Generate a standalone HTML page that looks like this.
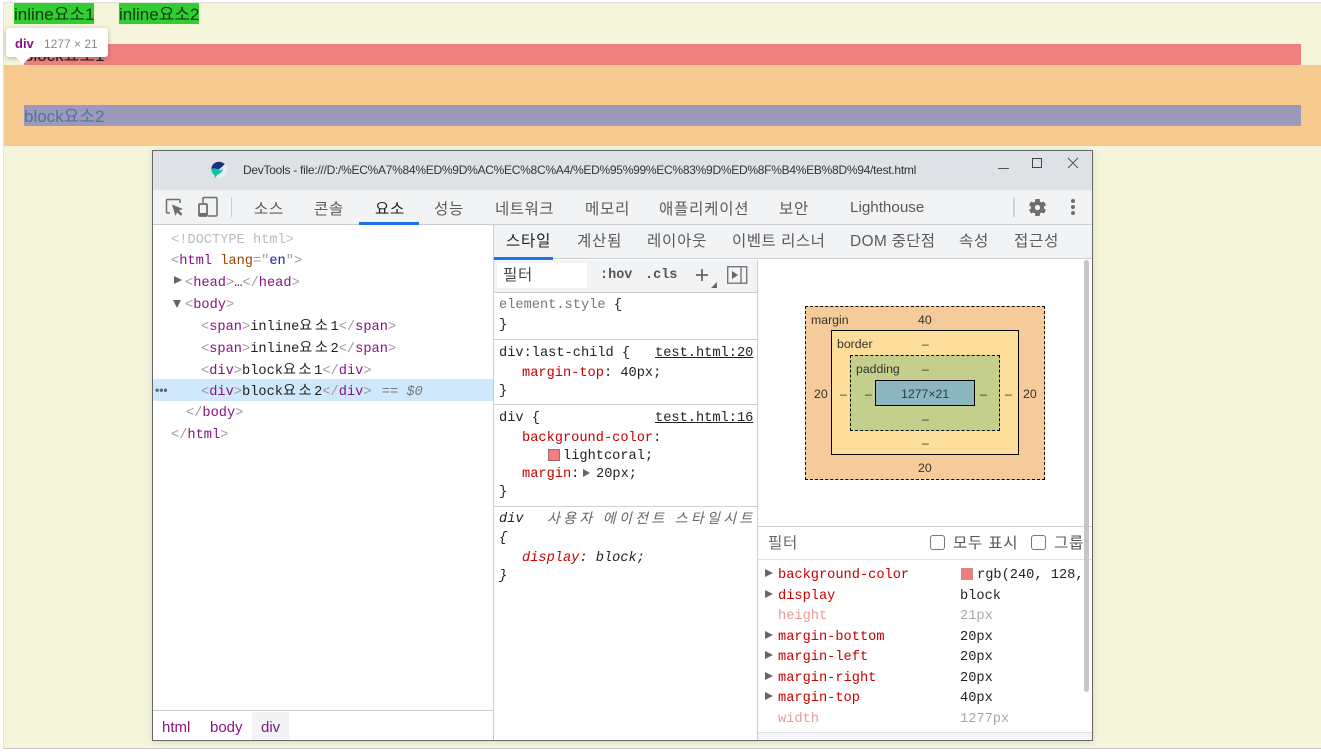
<!DOCTYPE html>
<html lang="ko"><head><meta charset="utf-8"><title>DevTools</title>
<style>
*{box-sizing:border-box}
html,body{margin:0;padding:0;width:1321px;height:753px;overflow:hidden;background:#fff}
body{position:relative;font-family:"Liberation Sans","Noto Sans CJK KR",sans-serif;font-size:14px;color:#000}
.b{position:absolute}
.t{position:absolute;white-space:nowrap;line-height:20px;height:20px;transform:translateY(2px)}
.m{font-family:"Liberation Mono","Noto Sans CJK KR",monospace;font-size:13.67px;color:#222}
.s{font-family:"Liberation Sans","Noto Sans CJK KR",sans-serif;font-size:15.5px;letter-spacing:.8px;color:#5a5a5a}
.g{color:#a3989f}.p{color:#881280}.a{color:#994500}.v{color:#1a1aa6}.c{color:#c80000}
.k{font-size:14px;letter-spacing:2.7px;line-height:0;font-family:"Noto Sans CJK KR",sans-serif}
.d{color:#a8a8a8}.f{color:#e79a9a}
.u{text-decoration:underline}
.l{height:1px;background:#cdd0d6;position:absolute}
.tri{position:absolute;width:0;height:0;border-left:8px solid #666;border-top:4.5px solid transparent;border-bottom:4.5px solid transparent}
.bm{font-size:12.3px;color:#333;font-family:"Liberation Sans","Noto Sans CJK KR",sans-serif;transform:translateY(1px)}
</style></head><body>

<div class="b" style="left:3px;top:2px;width:1318px;height:747px;background:#f5f5dc;border-top:1px solid #dfe1e3;border-left:1px solid #dfe1e3;border-bottom:1px solid #c8c8c8"></div>

<div class="b" style="left:14px;top:3px;width:80px;height:21px;background:#32cd32"></div>
<div class="b" style="left:119px;top:3px;width:80px;height:21px;background:#32cd32"></div>
<div class="t" style="left:14px;top:3px;font-size:17px;color:#0c3d0c">inline요소1</div>
<div class="t" style="left:119px;top:3px;font-size:17px;color:#0c3d0c">inline요소2</div>

<div class="b" style="left:24px;top:44px;width:1277px;height:21px;background:#f08080"></div>
<div class="t" style="left:24px;top:44px;font-size:17px;color:#222">block요소1</div>
<div class="b" style="left:4px;top:65px;width:1317px;height:81px;background:#f6c98f"></div>
<div class="b" style="left:24px;top:105px;width:1277px;height:21px;background:#9b9aba"></div>
<div class="t" style="left:24px;top:105px;font-size:17px;color:#4f74a0">block요소2</div>

<!-- tooltip -->
<div class="b" style="left:6px;top:28px;width:102px;height:29px;background:#fff;border-radius:3px;box-shadow:0 1px 5px rgba(0,0,0,.28)"></div>
<svg class="b" style="left:14px;top:56px" width="18" height="10"><path d="M2 1L9 8L16 1Z" fill="#fff"/></svg>
<div class="t" style="left:15px;top:32px;font-size:13px;font-weight:bold;color:#881280">div</div>
<div class="t" style="left:44px;top:32px;font-size:12px;color:#888">1277 × 21</div>

<!-- devtools window -->
<div class="b" style="left:152px;top:150px;width:941px;height:591px;background:#fff;border:1px solid #666;box-shadow:0 1px 6px rgba(0,0,0,.12)"></div>
<div class="b" style="left:153px;top:151px;width:939px;height:39px;background:#dee1e6"></div>
<svg class="b" style="left:209px;top:160px" width="20" height="20" viewBox="0 0 20 20"><circle cx="10" cy="10" r="8.300" fill="#e6f2f0"/><path d="M2.300 9C2.300 5 5.500 1.700 10 1.700c2.500 0 4.500 1 5.800 2.500L10 9.500 5 8.500z" fill="#1f2f80"/><path d="M2.200 8.500C5 8 8 8.500 10 10c1 .8 3-.5 4-2-.2 3.500-2.500 6-5.500 6.500L6 18.200l-.7-3.200C3.300 14 2 11 2.200 8.500z" fill="#12c0a8"/></svg>
<div class="t" style="left:243px;top:158px;font-size:12px;letter-spacing:-.27px;color:#333">DevTools - file:///D:/%EC%A7%84%ED%9D%AC%EC%8C%A4/%ED%95%99%EC%83%9D%ED%8F%B4%EB%8D%94/test.html</div>
<div class="b" style="left:998px;top:168px;width:11px;height:1px;background:#555"></div>
<div class="b" style="left:1032px;top:158px;width:10px;height:10px;border:1px solid #444"></div>
<svg class="b" style="left:1067px;top:157px" width="12" height="12"><path d="M1 1L11 11M11 1L1 11" stroke="#555" stroke-width="1" fill="none"/></svg>

<!-- toolbar -->
<div class="b" style="left:153px;top:190px;width:939px;height:35px;background:#f1f3f4;border-bottom:1px solid #cacdd1"></div>
<svg class="b" style="left:165px;top:198px" width="20" height="20" viewBox="0 0 20 20"><path d="M5 15H2.500A1 1 0 0 1 1.500 14V2.500A1 1 0 0 1 2.500 1.500H14A1 1 0 0 1 15 2.500V5" fill="none" stroke="#6e6e6e" stroke-width="1.500"/><path d="M7 6.500L18 11l-4 1.500 3.500 3.500-1.800 1.800-3.500-3.500L10.500 18z" fill="#6e6e6e"/></svg>
<svg class="b" style="left:197px;top:196px" width="22" height="22" viewBox="0 0 22 22"><path d="M6 7V2.500A1 1 0 0 1 7 1.500h12a1 1 0 0 1 1 1V19a1 1 0 0 1-1 1h-8" fill="none" stroke="#6e6e6e" stroke-width="1.500"/><rect x="2" y="8" width="8" height="12" rx="1" fill="none" stroke="#6e6e6e" stroke-width="1.800"/><rect x="2" y="17" width="8" height="3" fill="#6e6e6e"/></svg>
<div class="b" style="left:231px;top:197px;width:1px;height:20px;background:#ccc"></div>
<div class="t s" style="left:254px;top:198px">소스</div>
<div class="t s" style="left:314px;top:198px">콘솔</div>
<div class="t s" style="left:375px;top:198px;color:#222">요소</div>
<div class="t s" style="left:434px;top:198px">성능</div>
<div class="t s" style="left:495px;top:198px;letter-spacing:.5px">네트워크</div>
<div class="t s" style="left:585px;top:198px">메모리</div>
<div class="t s" style="left:659px;top:198px">애플리케이션</div>
<div class="t s" style="left:779px;top:198px">보안</div>
<div class="t s" style="left:850px;top:196px;font-size:15.2px;letter-spacing:0">Lighthouse</div>
<div class="b" style="left:359px;top:222px;width:60px;height:3px;background:#1a73e8"></div>
<div class="b" style="left:1013px;top:197px;width:2px;height:20px;background:#d0d3d8"></div>
<svg class="b" style="left:1027px;top:197px" width="21" height="21" viewBox="0 0 24 24"><path fill="#6e6e6e" fill-rule="evenodd" d="M19.400 13a7.500 7.500 0 0 0 0-2l2.300-1.800-2.300-4-2.800 1.100a7.500 7.500 0 0 0-1.700-1L14.500 2.300h-5l-.4 3a7.500 7.500 0 0 0-1.700 1L4.600 5.200l-2.300 4L4.600 11a7.500 7.500 0 0 0 0 2l-2.300 1.800 2.300 4 2.800-1.100a7.500 7.500 0 0 0 1.700 1l.4 3h5l.4-3a7.500 7.500 0 0 0 1.700-1l2.800 1.100 2.300-4zM12 15a3 3 0 1 1 0-6 3 3 0 0 1 0 6z"/></svg>
<svg class="b" style="left:1070px;top:198px" width="6" height="18"><circle cx="3" cy="3" r="2" fill="#6e6e6e"/><circle cx="3" cy="9" r="2" fill="#6e6e6e"/><circle cx="3" cy="15" r="2" fill="#6e6e6e"/></svg>

<!-- elements panel -->
<div class="b" style="left:493px;top:225px;width:1px;height:515px;background:#cacdd1"></div>
<div class="t m" style="left:171px;top:229px;color:#bbb">&lt;!DOCTYPE html&gt;</div>
<div class="t m" style="left:171px;top:250px"><span class="g">&lt;</span><span class="p">html</span> <span class="a">lang</span><span class="g">="</span><span class="v">en</span><span class="g">"&gt;</span></div>
<div class="tri" style="left:174px;top:276px"></div>
<div class="t m" style="left:185px;top:272px"><span class="g">&lt;</span><span class="p">head</span><span class="g">&gt;</span>…<span class="g">&lt;/</span><span class="p">head</span><span class="g">&gt;</span></div>
<div class="b" style="left:173px;top:300px;width:0;height:0;border-top:8px solid #666;border-left:4.500px solid transparent;border-right:4.500px solid transparent"></div>
<div class="t m" style="left:185px;top:294px"><span class="g">&lt;</span><span class="p">body</span><span class="g">&gt;</span></div>
<div class="t m" style="left:201px;top:316px"><span class="g">&lt;</span><span class="p">span</span><span class="g">&gt;</span>inline<span class="k">요소</span>1<span class="g">&lt;/</span><span class="p">span</span><span class="g">&gt;</span></div>
<div class="t m" style="left:201px;top:338px"><span class="g">&lt;</span><span class="p">span</span><span class="g">&gt;</span>inline<span class="k">요소</span>2<span class="g">&lt;/</span><span class="p">span</span><span class="g">&gt;</span></div>
<div class="t m" style="left:201px;top:360px"><span class="g">&lt;</span><span class="p">div</span><span class="g">&gt;</span>block<span class="k">요소</span>1<span class="g">&lt;/</span><span class="p">div</span><span class="g">&gt;</span></div>
<div class="b" style="left:153px;top:379px;width:340px;height:22px;background:#cfe8fc"></div>
<div class="t" style="left:155px;top:378px;font-size:12px;font-weight:bold;color:#666;letter-spacing:0">•••</div>
<div class="t m" style="left:201px;top:381px"><span class="g">&lt;</span><span class="p">div</span><span class="g">&gt;</span>block<span class="k">요소</span>2<span class="g">&lt;/</span><span class="p">div</span><span class="g">&gt;</span> <span style="color:#777;font-style:italic;margin-left:2px">== $0</span></div>
<div class="t m" style="left:186px;top:402px"><span class="g">&lt;/</span><span class="p">body</span><span class="g">&gt;</span></div>
<div class="t m" style="left:171px;top:424px"><span class="g">&lt;/</span><span class="p">html</span><span class="g">&gt;</span></div>

<!-- breadcrumbs -->
<div class="b" style="left:153px;top:710px;width:340px;height:1px;background:#cacdd1"></div>
<div class="b" style="left:252px;top:712px;width:37px;height:28px;background:#f1f3f4"></div>
<div class="t" style="left:162px;top:716px;color:#881280;font-size:15px">html</div>
<div class="t" style="left:210px;top:716px;color:#881280;font-size:15px">body</div>
<div class="t" style="left:261px;top:716px;color:#881280;font-size:15px">div</div>

<!-- subtabs -->
<div class="b" style="left:494px;top:225px;width:598px;height:34px;background:#f1f3f4;border-bottom:1px solid #cacdd1"></div>
<div class="t s" style="left:506px;top:230px;color:#222">스타일</div>
<div class="t s" style="left:577px;top:230px">계산됨</div>
<div class="t s" style="left:647px;top:230px">레이아웃</div>
<div class="t s" style="left:732px;top:230px;letter-spacing:.5px">이벤트 리스너</div>
<div class="t s" style="left:850px;top:230px;letter-spacing:.3px">DOM 중단점</div>
<div class="t s" style="left:959px;top:230px">속성</div>
<div class="t s" style="left:1014px;top:230px">접근성</div>
<div class="b" style="left:494px;top:257px;width:59px;height:3px;background:#1a73e8"></div>

<!-- styles pane -->
<div class="b" style="left:494px;top:260px;width:263px;height:33px;background:#f1f3f4;border-bottom:1px solid #cdd0d6"></div>
<div class="b" style="left:497px;top:263px;width:90px;height:25px;background:#fff"></div>
<div class="t s" style="left:503px;top:264px;color:#444">필터</div>
<div class="t" style="left:600px;top:264px;font-family:'Liberation Mono',monospace;font-size:13.5px;font-weight:bold;color:#555">:hov</div>
<div class="t" style="left:645px;top:264px;font-family:'Liberation Mono',monospace;font-size:13.5px;font-weight:bold;color:#555">.cls</div>
<svg class="b" style="left:694px;top:267px" width="24" height="22"><path d="M2 8H14M8 2V14" stroke="#666" stroke-width="1.800"/><path d="M23 15V21H17Z" fill="#666"/></svg>
<svg class="b" style="left:727px;top:266px" width="21" height="19"><rect x=".7" y=".7" width="19" height="16.500" fill="none" stroke="#777" stroke-width="1.400"/><path d="M14 1V17" stroke="#777" stroke-width="1.400"/><path d="M5 5L11 9L5 13Z" fill="#666"/></svg>
<div class="b" style="left:757px;top:260px;width:1px;height:480px;background:#cacdd1"></div>

<div class="t m" style="left:499px;top:294px;color:#777">element.style <span style="color:#222">{</span></div>
<div class="t m" style="left:499px;top:314px">}</div>
<div class="l" style="left:494px;top:339px;width:263px"></div>
<div class="t m" style="left:499px;top:342px">div:last-child {</div>
<div class="t m u" style="left:655px;top:342px">test.html:20</div>
<div class="t m" style="left:522px;top:362px"><span class="c">margin-top</span>: 40px;</div>
<div class="t m" style="left:499px;top:380px">}</div>
<div class="l" style="left:494px;top:404px;width:263px"></div>
<div class="t m" style="left:499px;top:407px">div {</div>
<div class="t m u" style="left:655px;top:407px">test.html:16</div>
<div class="t m" style="left:522px;top:427px"><span class="c">background-color</span>:</div>
<div class="b" style="left:548px;top:449px;width:12px;height:12px;background:#f08080;border:1px solid #a06a6a"></div>
<div class="t m" style="left:563px;top:445px">lightcoral;</div>
<div class="t m" style="left:522px;top:463px"><span class="c">margin</span>:</div>
<div class="tri" style="left:583px;top:469px;border-left-width:7px"></div>
<div class="t m" style="left:596px;top:463px">20px;</div>
<div class="t m" style="left:499px;top:481px">}</div>
<div class="l" style="left:494px;top:506px;width:263px"></div>
<div class="t m" style="left:499px;top:508px;font-style:italic">div</div>
<div class="t" style="left:547px;top:506px;font-size:14px;font-style:italic;color:#666;letter-spacing:3.300px;font-family:'Noto Sans CJK KR',sans-serif">사용자 에이전트 스타일시트</div>
<div class="t m" style="left:499px;top:527px;font-style:italic">{</div>
<div class="t m" style="left:522px;top:547px;font-style:italic"><span class="c">display</span>: block;</div>
<div class="t m" style="left:499px;top:565px;font-style:italic">}</div>

<!-- box model -->
<div class="b" style="left:805px;top:306px;width:240px;height:174px;background:#f6cb9a;border:1px dashed #000"></div>
<div class="b" style="left:831px;top:330px;width:188px;height:125px;background:#fddd9a;border:1px solid #000"></div>
<div class="b" style="left:850px;top:355px;width:150px;height:76px;background:#c3cf8b;border:1px dashed #000"></div>
<div class="b" style="left:875px;top:380px;width:100px;height:26px;background:#8cb6c0;border:1px solid #000"></div>
<div class="t bm" style="left:811px;top:309px">margin</div>
<div class="t bm" style="left:918px;top:309px">40</div>
<div class="t bm" style="left:837px;top:333px">border</div>
<div class="t bm" style="left:922px;top:333px">–</div>
<div class="t bm" style="left:856px;top:358px">padding</div>
<div class="t bm" style="left:922px;top:358px">–</div>
<div class="t bm" style="left:901px;top:383px;color:#2c3a50">1277×21</div>
<div class="t bm" style="left:814px;top:383px">20</div>
<div class="t bm" style="left:840px;top:383px">–</div>
<div class="t bm" style="left:865px;top:383px">–</div>
<div class="t bm" style="left:980px;top:383px">–</div>
<div class="t bm" style="left:1005px;top:383px">–</div>
<div class="t bm" style="left:1023px;top:383px">20</div>
<div class="t bm" style="left:922px;top:408px">–</div>
<div class="t bm" style="left:922px;top:432px">–</div>
<div class="t bm" style="left:918px;top:457px">20</div>

<div class="l" style="left:758px;top:526px;width:334px"></div>
<div class="t s" style="left:768px;top:532px;color:#666">필터</div>
<div class="b" style="left:930px;top:535px;width:15px;height:15px;border:1.500px solid #777;border-radius:3px;background:#fff"></div>
<div class="t s" style="left:953px;top:532px;color:#555">모두 표시</div>
<div class="b" style="left:1031px;top:535px;width:15px;height:15px;border:1.500px solid #777;border-radius:3px;background:#fff"></div>
<div class="t s" style="left:1054px;top:532px;color:#555">그룹</div>
<div class="l" style="left:758px;top:559px;width:334px;background:#dfe1e5"></div>

<div class="tri" style="left:765px;top:569px"></div>
<div class="t m" style="left:778px;top:564px;color:#c80000">background-color</div>
<div class="b" style="left:961px;top:568px;width:12px;height:12px;background:#f08080;border:1px solid #c88"></div>
<div class="t m" style="left:977px;top:564px">rgb(240, 128,</div>
<div class="tri" style="left:765px;top:590px"></div>
<div class="t m c" style="left:778px;top:585px">display</div>
<div class="t m" style="left:960px;top:585px">block</div>
<div class="t m f" style="left:778px;top:605px">height</div>
<div class="t m d" style="left:960px;top:605px">21px</div>
<div class="tri" style="left:765px;top:631px"></div>
<div class="t m c" style="left:778px;top:626px">margin-bottom</div>
<div class="t m" style="left:960px;top:626px">20px</div>
<div class="tri" style="left:765px;top:651px"></div>
<div class="t m c" style="left:778px;top:646px">margin-left</div>
<div class="t m" style="left:960px;top:646px">20px</div>
<div class="tri" style="left:765px;top:672px"></div>
<div class="t m c" style="left:778px;top:667px">margin-right</div>
<div class="t m" style="left:960px;top:667px">20px</div>
<div class="tri" style="left:765px;top:692px"></div>
<div class="t m c" style="left:778px;top:687px">margin-top</div>
<div class="t m" style="left:960px;top:687px">40px</div>
<div class="t m f" style="left:778px;top:708px">width</div>
<div class="t m d" style="left:960px;top:708px">1277px</div>
<div class="b" style="left:758px;top:732px;width:334px;height:8px;background:#f5f6f8;border-top:1px solid #dfe1e5"></div>
<div class="b" style="left:1084px;top:260px;width:5px;height:432px;background:#c6c6c6;border-radius:3px"></div>

</body></html>
